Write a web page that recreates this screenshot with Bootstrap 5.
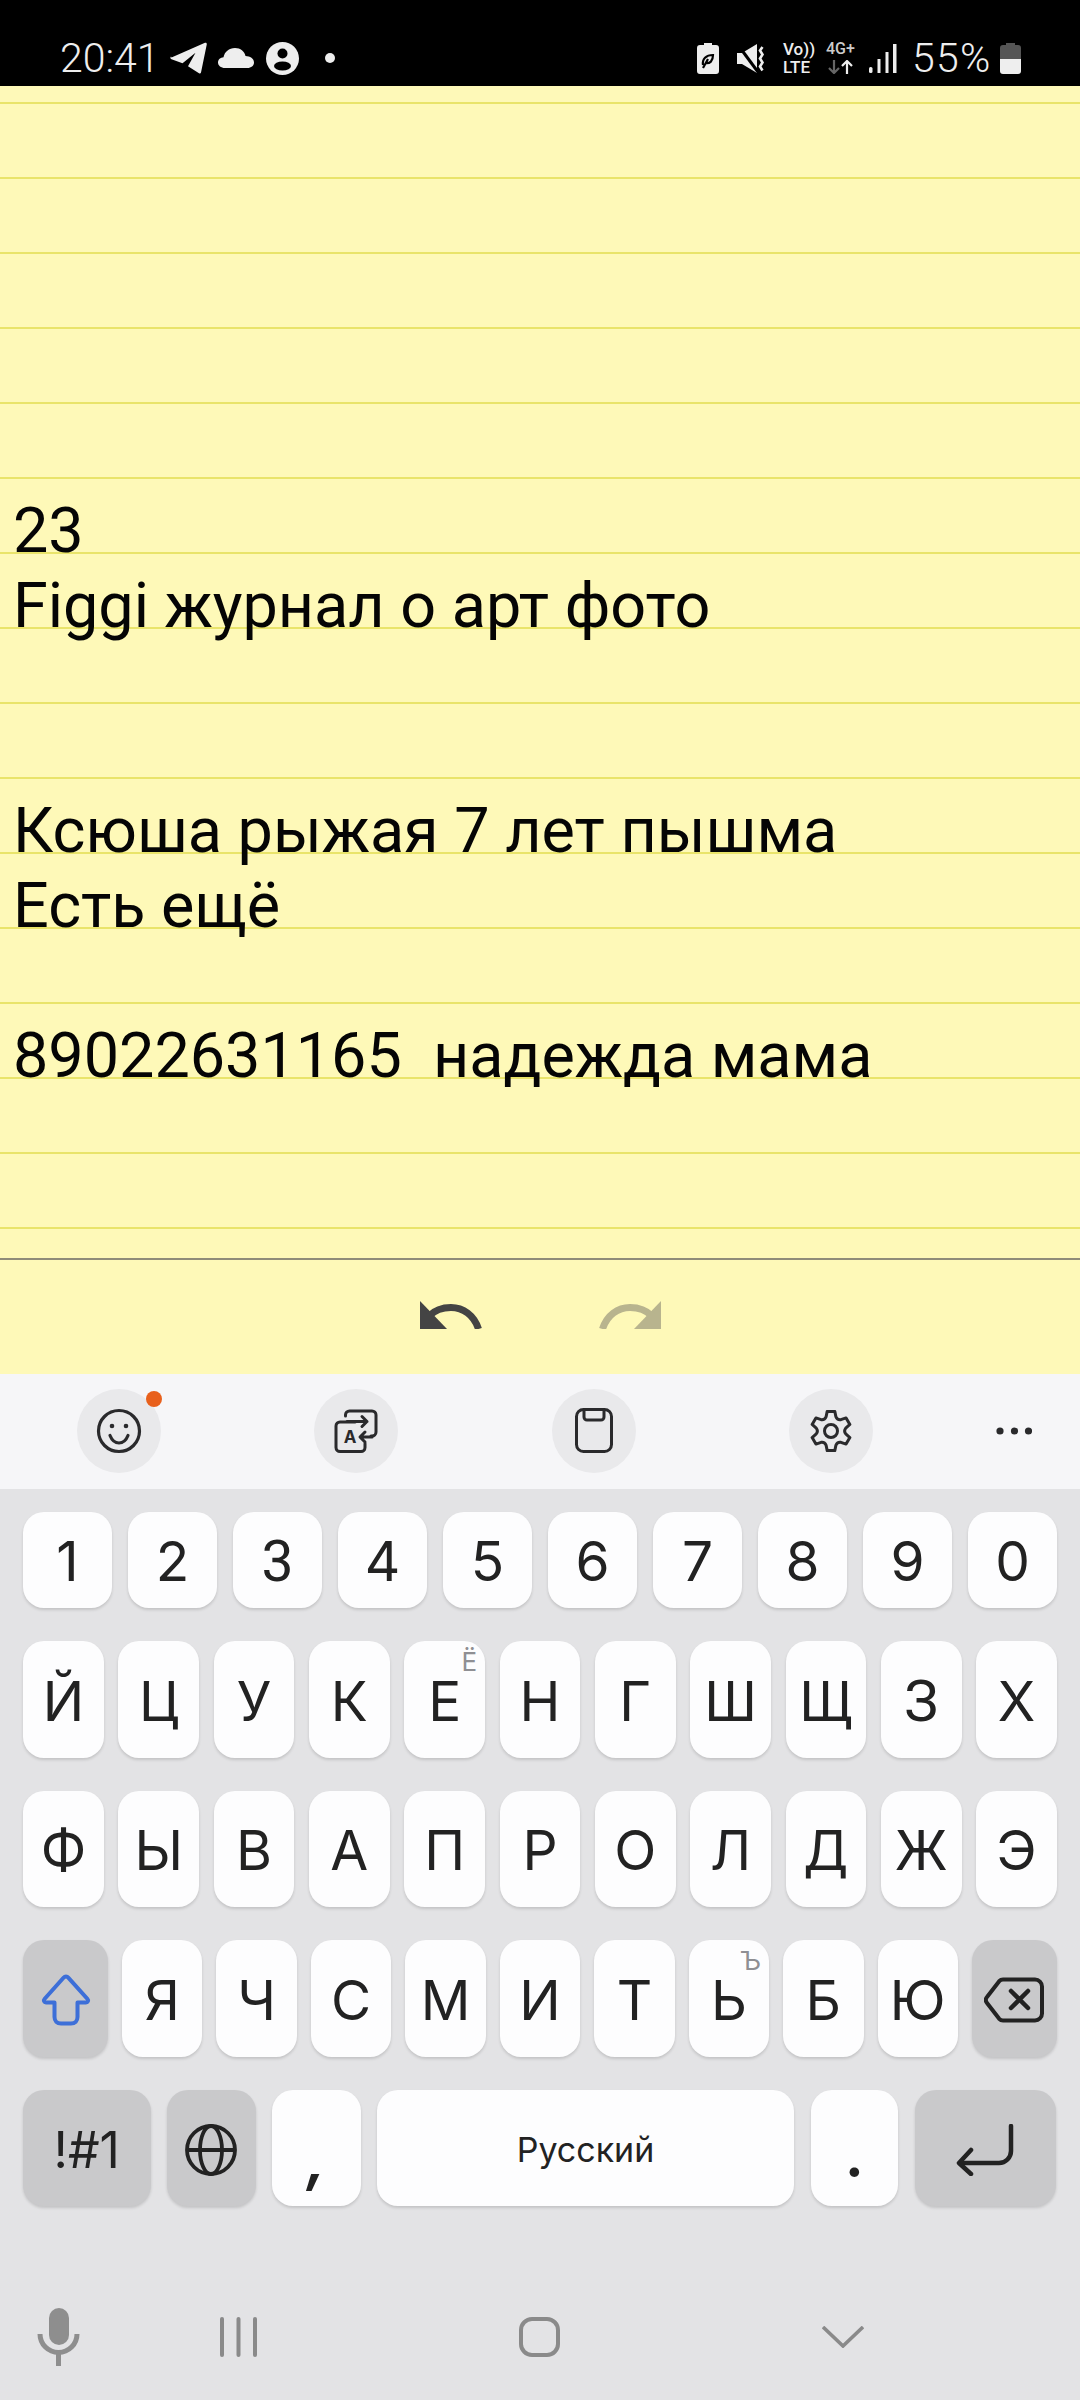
<!DOCTYPE html>
<html lang="ru">
<head>
    <meta charset="UTF-8">
    <meta name="viewport" content="width=device-width, initial-scale=1.0">
    <title>Note</title>
    <link rel="stylesheet" href="https://cdn.jsdelivr.net/npm/bootstrap@5.3.0/dist/css/bootstrap.min.css">
    <script src="https://cdn.jsdelivr.net/npm/bootstrap@5.3.0/dist/js/bootstrap.bundle.min.js"></script>
    <style>
        html, body { width: 1080px; height: 2400px; overflow: hidden; }
        body { background: #e3e3e5; font-family: "Roboto", sans-serif; }

        /* status bar */
        .status-bar { height: 86px; background: #000; color: #eee; padding: 30px 59px 0 60px; font-family: "Roboto", sans-serif; }
        .status-bar svg { display: block; }
        .st-time { font-size: 41px; font-weight: 300; line-height: 56px; }
        .st-percent { font-size: 41px; font-weight: 300; line-height: 56px; width: 80px; white-space: nowrap; letter-spacing: 1.200px; }
        .st-volte { width: 31px; font-size: 17px; font-weight: 500; line-height: 18px; white-space: nowrap; }
        .st-net { width: 31px; font-size: 16px; font-weight: 500; line-height: 14px; color: #ccc; white-space: nowrap; }
        .ml-10 { margin-left: 10px; }
        .ml-11 { margin-left: 11px; }
        .ml-12 { margin-left: 12px; }
        .ml-15 { margin-left: 15px; }
        .ml-17 { margin-left: 17px; }
        .ml-18 { margin-left: 18px; }
        .ml-26 { margin-left: 26px; }
        .ml-8 { margin-left: 8px; }

        /* note paper */
        .note-paper {
            height: 1172px; padding: 32px 13px 0; overflow: hidden;
            background-color: #fef9b8;
            background-image: linear-gradient(to bottom, transparent 73px, #e9e46a 73px);
            background-size: 1054px 75px; background-position: 13px -57px; background-repeat: repeat;
            font-size: 62.900px; line-height: 75px; color: #050505; white-space: pre;
        }
        .undo-bar { height: 116px; background: #fef9b8; border-top: 2px solid #8f8c78; padding-top: 41px; gap: 117px; }
        .undo-bar svg { display: block; }

        /* keyboard tool strip */
        .tool-strip { height: 115px; background: #f6f6f8; padding: 0 0 2px 77px; gap: 153.300px; }
        .tool-btn { width: 84px; height: 84px; background: #e9e9eb; }
        .tool-badge { width: 16px; height: 16px; background: #e8601c; top: 2px; right: -1px; }
        .tool-more { margin-left: -30px; }

        /* keys */
        .kb-area { height: 785px; padding: 23px 23px 0; font-family: "Inter", sans-serif; color: #222; gap: 33px; }
        .kb-row { gap: 14.500px; }
        .kb-row-num { height: 96px; gap: 16px; }
        .kb-row-tall { height: 117px; }
        .kb-row-mid { height: 116px; }
        .kb-row-shift { height: 117px; gap: 14px; }
        .kb-row-bottom { height: 116px; gap: 16.500px; }
        .kb-key { flex: 1 1 0; background: #fdfdfe; border-radius: 21px; box-shadow: 0 2px 3px rgba(0, 0, 0, .14); font-size: 55px; line-height: 1; padding-top: 3px; }
        .kb-dark { background: #c9c9cb; }
        .kb-round { font-family: "Roboto", sans-serif; font-size: 57px; }
        .kb-hint { font-size: 26px; color: #8f8f93; top: 7px; right: 8px; line-height: 1.100; font-family: "Inter", sans-serif; }
        .w-85 { flex: 0 0 85px; }
        .w-127 { flex: 0 0 127.500px; font-size: 50px; }
        .w-88 { flex: 0 0 88.500px; }
        .w-87 { flex: 0 0 87.500px; }
        .w-141 { flex: 0 0 141px; }
        .w-space { flex: 0 0 417px; font-size: 34px; }
        .kb-punct { align-items: flex-end !important; padding-bottom: 22px; font-size: 56px; font-weight: 700; }
        .kb-comma { font-style: italic; padding-bottom: 18px; }

        /* nav bar */
        .nav-strip { height: 126px; padding-left: 37px; }
        .nav-strip svg { display: block; }
        .nav-recent { margin-left: 140px; }
        .nav-home { margin-left: 262px; }
        .nav-back { margin-left: 262px; }
    </style>
</head>
<body class="d-flex flex-column m-0">

    <div class="status-bar d-flex justify-content-between align-items-center">
        <div class="d-flex align-items-center">
            <span class="st-time">20:41</span>
            <svg class="ml-10" width="37" height="32" viewBox="0 0 37 32"><path d="M1.500 15.500 35 .8c1-.4 2 .3 1.800 1.400L31 30.500c-.2 1-1.200 1.200-2 .7l-11-7 7.500-13.500-13 10.500-11-4c-1.200-.5-1.500-2-.5-2.700Z" fill="#eee"/></svg>
            <svg class="ml-11" width="36" height="20" viewBox="0 0 36 20"><path d="M7 20C3 20 0 17.500 0 14.500 0 11.500 2.500 9.500 5.500 9.300 6.500 4 11 0 17 0c5.500 0 9.500 3.500 10.500 8 4.500.2 8.500 2.500 8.500 6.500 0 3.200-3 5.500-6.500 5.500Z" fill="#eee"/></svg>
            <svg class="ml-12" width="33" height="33" viewBox="0 0 33 33"><circle cx="16.500" cy="16.500" r="16.500" fill="#eee"/><circle cx="16.500" cy="11.500" r="5" fill="#000"/><ellipse cx="16.500" cy="24" rx="8.500" ry="4.500" fill="#000"/></svg>
            <svg class="ml-26" width="10" height="10" viewBox="0 0 10 10"><circle cx="5" cy="5" r="5" fill="#eee"/></svg>
        </div>
        <div class="d-flex align-items-center">
            <svg width="22" height="31" viewBox="0 0 22 31"><path d="M7 0h8v2h4a3 3 0 0 1 3 3v23a3 3 0 0 1-3 3H3a3 3 0 0 1-3-3V5a3 3 0 0 1 3-3h4Z" fill="#eee"/><path d="M6 22c-1-6 3-10 10-10 0 6-3 9-8 8M6 25l5-9" fill="none" stroke="#000" stroke-width="2.200"/></svg>
            <svg class="ml-18" width="29" height="29" viewBox="0 0 29 29"><path d="M0 9h5L20 0V29L5 20H0Z" fill="#eee"/><path d="M1 1 21 28" stroke="#000" stroke-width="3"/><path d="M25.500 3l-2.500 3.500 2.500 4-2.500 4 2.500 4-2.500 4 2.500 4" fill="none" stroke="#eee" stroke-width="2.600"/></svg>
            <div class="st-volte ml-17">Vo))<br>LTE</div>
            <div class="st-net ml-12">4G+
                <svg class="mt-1" width="31" height="14" viewBox="0 0 31 14"><path d="M8 0v12M3 8l5 5 5-5" fill="none" stroke="#666" stroke-width="2.200"/><path d="M21 14V2M16 6l5-5 5 5" fill="none" stroke="#eee" stroke-width="2.200"/></svg>
            </div>
            <svg class="ml-12" width="28" height="29" viewBox="0 0 28 29"><rect x="0" y="23" width="3.500" height="6" rx="1.500" fill="#eee"/><rect x="8.500" y="15" width="3" height="14" fill="#eee"/><rect x="16.500" y="8" width="3" height="21" fill="#eee"/><rect x="24" y="0" width="3.500" height="29" fill="#eee"/></svg>
            <span class="st-percent ml-15">55%</span>
            <svg class="ml-8" width="21" height="31" viewBox="0 0 21 31"><path d="M6 0h9v2h3a3 3 0 0 1 3 3v11H0V5a3 3 0 0 1 3-3h3Z" fill="#555"/><path d="M0 16h21v12a3 3 0 0 1-3 3H3a3 3 0 0 1-3-3Z" fill="#eee"/></svg>
        </div>
    </div>

    <div class="note-paper">




23
Figgi журнал о арт фото


Ксюша рыжая 7 лет пышма
Есть ещё

89022631165  надежда мама</div>

    <div class="undo-bar d-flex justify-content-center align-items-start">
        <svg width="62" height="28" viewBox="0 0 62 28"><path d="M0 0V28H27Z" fill="#444"/><path d="M9 15C14 10 22 6.500 31 6.500 43 6.500 54 14 58.500 28" fill="none" stroke="#444" stroke-width="7"/></svg>
        <svg width="62" height="28" viewBox="0 0 62 28"><g transform="matrix(-1 0 0 1 62 0)"><path d="M0 0V28H27Z" fill="#b8b48e"/><path d="M9 15C14 10 22 6.500 31 6.500 43 6.500 54 14 58.500 28" fill="none" stroke="#b8b48e" stroke-width="7"/></g></svg>
    </div>

    <div class="tool-strip d-flex align-items-center">
        <div class="tool-btn rounded-circle position-relative d-flex align-items-center justify-content-center">
            <svg width="46" height="46" viewBox="0 0 46 46" fill="none" stroke="#2a2a2c" stroke-width="3.200" stroke-linecap="round"><circle cx="23" cy="23" r="20.500"/><path d="M14 27.500c2 5 5.500 7.500 9 7.500s7-2.500 9-7.500"/><circle cx="16" cy="18" r="2.300" fill="#2a2a2c" stroke="none"/><circle cx="30" cy="18" r="2.300" fill="#2a2a2c" stroke="none"/></svg>
            <span class="tool-badge rounded-circle position-absolute"></span>
        </div>
        <div class="tool-btn rounded-circle d-flex align-items-center justify-content-center">
            <svg width="44" height="44" viewBox="0 0 44 44" fill="none" stroke="#2a2a2c" stroke-width="3" stroke-linecap="round" stroke-linejoin="round"><path d="M11.500 7V6a4 4 0 0 1 4-4h22.500a4 4 0 0 1 4 4v17a4 4 0 0 1-4 4h-1"/><path d="M13 12.500h20M28 7.500l5 5-5 5"/><path d="M21 13H6a4 4 0 0 0-4 4v21.500a4 4 0 0 0 4 4h21a4 4 0 0 0 4-4v-4"/><path d="M38 28H27M31 23l-5 5 5 5"/><text x="16" y="33.500" font-family="Inter, sans-serif" font-size="17" font-weight="700" text-anchor="middle" fill="#2a2a2c" stroke="none">A</text></svg>
        </div>
        <div class="tool-btn rounded-circle d-flex align-items-center justify-content-center">
            <svg width="38" height="45" viewBox="0 0 38 45" fill="none" stroke="#2a2a2c" stroke-width="3" stroke-linecap="round"><rect x="1.500" y="1.500" width="35" height="42" rx="7"/><path d="M9 2v7a3 3 0 0 0 3 3h14a3 3 0 0 0 3-3V2"/></svg>
        </div>
        <div class="tool-btn rounded-circle d-flex align-items-center justify-content-center">
            <svg width="42" height="42" viewBox="0 0 42 42" fill="none" stroke="#2a2a2c" stroke-width="3" stroke-linejoin="round"><path d="M16.100 6.800 17.200 1.400H24.800L25.900 6.800Q27.250 10.200 30.850 9.660L36.070 7.910 39.870 14.490 35.750 18.140Q33.500 21 35.750 23.860L39.870 27.510 36.070 34.090 30.850 32.340Q27.250 31.800 25.900 35.200L24.800 40.600H17.200L16.100 35.200Q14.750 31.800 11.150 32.340L5.930 34.090 2.130 27.510 6.250 23.860Q8.500 21 6.250 18.140L2.130 14.490 5.930 7.910 11.150 9.660Q14.750 10.200 16.100 6.800Z"/><circle cx="21" cy="21" r="6.500"/></svg>
        </div>
        <svg class="tool-more" width="36" height="8" viewBox="0 0 36 8" fill="#2a2a2c"><circle cx="4" cy="4" r="3.600"/><circle cx="18.500" cy="4" r="3.600"/><circle cx="32.500" cy="4" r="3.600"/></svg>
    </div>

    <div class="kb-area d-flex flex-column">
        <div class="kb-row kb-row-num d-flex">
            <div class="kb-key d-flex align-items-center justify-content-center">1</div>
            <div class="kb-key d-flex align-items-center justify-content-center">2</div>
            <div class="kb-key kb-round d-flex align-items-center justify-content-center">3</div>
            <div class="kb-key d-flex align-items-center justify-content-center">4</div>
            <div class="kb-key d-flex align-items-center justify-content-center">5</div>
            <div class="kb-key d-flex align-items-center justify-content-center">6</div>
            <div class="kb-key d-flex align-items-center justify-content-center">7</div>
            <div class="kb-key d-flex align-items-center justify-content-center">8</div>
            <div class="kb-key d-flex align-items-center justify-content-center">9</div>
            <div class="kb-key d-flex align-items-center justify-content-center">0</div>
        </div>
        <div class="kb-row kb-row-tall d-flex">
            <div class="kb-key d-flex align-items-center justify-content-center">Й</div>
            <div class="kb-key d-flex align-items-center justify-content-center">Ц</div>
            <div class="kb-key d-flex align-items-center justify-content-center">У</div>
            <div class="kb-key d-flex align-items-center justify-content-center">К</div>
            <div class="kb-key d-flex align-items-center justify-content-center position-relative">Е<span class="kb-hint position-absolute">Ё</span></div>
            <div class="kb-key d-flex align-items-center justify-content-center">Н</div>
            <div class="kb-key d-flex align-items-center justify-content-center">Г</div>
            <div class="kb-key d-flex align-items-center justify-content-center">Ш</div>
            <div class="kb-key d-flex align-items-center justify-content-center">Щ</div>
            <div class="kb-key kb-round d-flex align-items-center justify-content-center">З</div>
            <div class="kb-key d-flex align-items-center justify-content-center">Х</div>
        </div>
        <div class="kb-row kb-row-mid d-flex">
            <div class="kb-key d-flex align-items-center justify-content-center">Ф</div>
            <div class="kb-key d-flex align-items-center justify-content-center">Ы</div>
            <div class="kb-key d-flex align-items-center justify-content-center">В</div>
            <div class="kb-key d-flex align-items-center justify-content-center">А</div>
            <div class="kb-key d-flex align-items-center justify-content-center">П</div>
            <div class="kb-key d-flex align-items-center justify-content-center">Р</div>
            <div class="kb-key d-flex align-items-center justify-content-center">О</div>
            <div class="kb-key d-flex align-items-center justify-content-center">Л</div>
            <div class="kb-key d-flex align-items-center justify-content-center">Д</div>
            <div class="kb-key d-flex align-items-center justify-content-center">Ж</div>
            <div class="kb-key d-flex align-items-center justify-content-center">Э</div>
        </div>
        <div class="kb-row kb-row-shift d-flex">
            <div class="kb-key kb-dark w-85 d-flex align-items-center justify-content-center">
                <svg width="50" height="52" viewBox="0 0 50 52" fill="none" stroke="#3d6fd8" stroke-width="4" stroke-linejoin="round"><path d="M25 2.500c-1 0-1.800.5-2.500 1.300L3.500 25c-1.300 1.500-.4 3.500 1.500 3.500h8.500V43c0 4 2.500 6.500 6.500 6.500h10c4 0 6.500-2.500 6.500-6.500V28.500H45c1.900 0 2.800-2 1.500-3.500L27.500 3.800c-.7-.8-1.500-1.300-2.500-1.300Z"/></svg>
            </div>
            <div class="kb-key d-flex align-items-center justify-content-center">Я</div>
            <div class="kb-key d-flex align-items-center justify-content-center">Ч</div>
            <div class="kb-key d-flex align-items-center justify-content-center">С</div>
            <div class="kb-key d-flex align-items-center justify-content-center">М</div>
            <div class="kb-key d-flex align-items-center justify-content-center">И</div>
            <div class="kb-key d-flex align-items-center justify-content-center">Т</div>
            <div class="kb-key d-flex align-items-center justify-content-center position-relative">Ь<span class="kb-hint position-absolute">Ъ</span></div>
            <div class="kb-key d-flex align-items-center justify-content-center">Б</div>
            <div class="kb-key d-flex align-items-center justify-content-center">Ю</div>
            <div class="kb-key kb-dark w-85 d-flex align-items-center justify-content-center">
                <svg width="60" height="46" viewBox="0 0 60 46" fill="none" stroke="#222" stroke-width="4" stroke-linecap="round" stroke-linejoin="round"><path d="M19 2.500H51a7 7 0 0 1 7 7v27a7 7 0 0 1-7 7H19c-1.500 0-2.800-.6-3.800-1.700L3 26c-1.500-1.800-1.500-4.200 0-6L15.200 4.200C16.200 3.100 17.500 2.500 19 2.500Z"/><path d="M27 14l17 17M44 14 27 31" stroke-width="4.500"/></svg>
            </div>
        </div>
        <div class="kb-row kb-row-bottom d-flex">
            <div class="kb-key kb-dark w-127 d-flex align-items-center justify-content-center">!#1</div>
            <div class="kb-key kb-dark w-88 d-flex align-items-center justify-content-center">
                <svg width="52" height="52" viewBox="0 0 52 52" fill="none" stroke="#222" stroke-width="3.800"><circle cx="26" cy="26" r="24"/><ellipse cx="26" cy="26" rx="11" ry="24"/><path d="M2 26H50"/></svg>
            </div>
            <div class="kb-key w-88 kb-punct kb-comma d-flex justify-content-center">,</div>
            <div class="kb-key w-space d-flex align-items-center justify-content-center">Русский</div>
            <div class="kb-key w-87 kb-punct d-flex justify-content-center">.</div>
            <div class="kb-key kb-dark w-141 d-flex align-items-center justify-content-center">
                <svg width="58" height="52" viewBox="0 0 58 52" fill="none" stroke="#222" stroke-width="4.500" stroke-linecap="round" stroke-linejoin="round"><path d="M55 2V27a12 12 0 0 1-12 12H4"/><path d="M15 26 3 39 15 50"/></svg>
            </div>
        </div>
    </div>

    <div class="nav-strip d-flex align-items-center">
        <svg width="43" height="58" viewBox="0 0 43 58" fill="none"><rect x="12" y="0" width="20" height="37" rx="10" fill="#8e8e8e"/><path d="M3 26A18.500 18.500 0 0 0 40 26M21.500 45V58" stroke="#8e8e8e" stroke-width="5"/></svg>
        <svg class="nav-recent" width="37" height="40" viewBox="0 0 37 40" fill="#8a8a8a"><rect x="0" y="0" width="4" height="40" rx="2"/><rect x="16.500" y="0" width="4" height="40" rx="2"/><rect x="33" y="0" width="4" height="40" rx="2"/></svg>
        <svg class="nav-home" width="41" height="40" viewBox="0 0 41 40" fill="none" stroke="#8a8a8a" stroke-width="4"><rect x="2" y="2" width="37" height="36" rx="11"/></svg>
        <svg class="nav-back" width="42" height="22" viewBox="0 0 42 22" fill="none" stroke="#8a8a8a" stroke-width="3.600"><path d="M1 1 21 20 41 1"/></svg>
    </div>

</body>
</html>
